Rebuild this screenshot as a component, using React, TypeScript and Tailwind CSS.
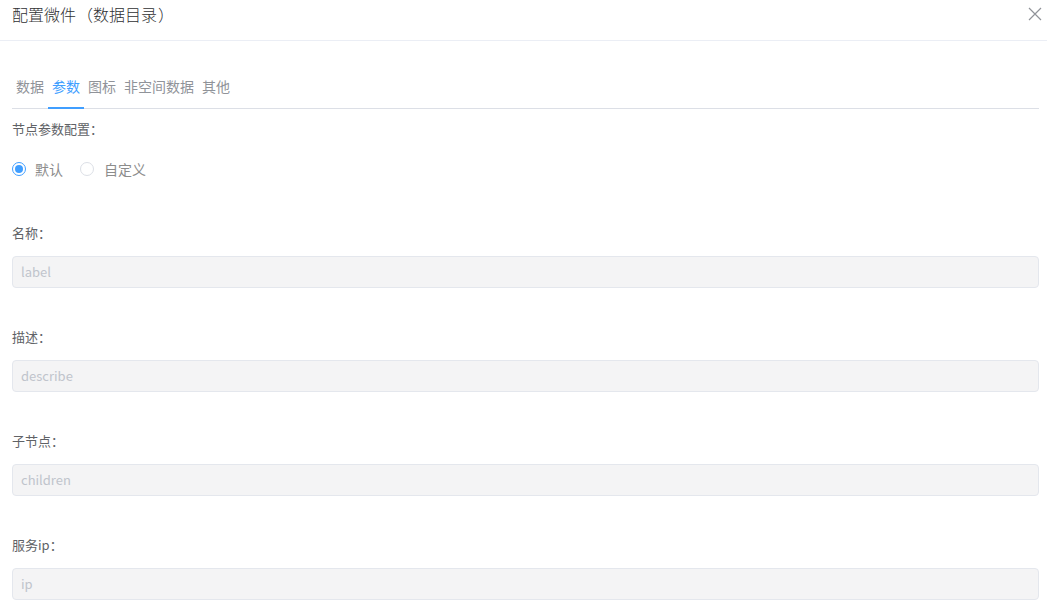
import React from "react";

const font = { fontFamily: '"Noto Sans CJK SC", "Noto Sans", sans-serif' };

function Field({ label, placeholder }: { label: string; placeholder: string }) {
  return (
    <div className="mt-[39px] first:mt-[44px]">
      <div className="text-[13px] leading-[20px] text-[#606266]">{label}</div>
      <div className="mt-[13px] h-[32px] rounded-[4px] border border-[#e4e7ed] bg-[#f4f4f5] pl-[8px] text-[13px] leading-[30px] text-[#c0c4cc]">
        {placeholder}
      </div>
    </div>
  );
}

export default function App() {
  const tabs = ["数据", "参数", "图标", "非空间数据", "其他"];
  return (
    <div className="h-[609px] w-[1047px] overflow-hidden bg-white" style={font}>
      <div className="flex h-[41px] items-start justify-between border-b border-[#ebeef5] pl-3 pr-[4px]">
        <div className="pt-[4px] text-[16px] font-light leading-[20px] text-[#303133]">
          配置微件<span className="ml-[1px]">（</span>数据目录<span className="ml-[1px]">）</span>
        </div>
        <svg className="mr-[1px] mt-[7px]" width="14" height="14" viewBox="0 0 14 14">
          <path d="M1 1 L13 13 M13 1 L1 13" stroke="#909399" strokeWidth="1.2" fill="none" />
        </svg>
      </div>
      <div className="pl-3 pr-2 pt-[26px]">
        <div className="relative flex border-b border-[#dcdfe6]">
          {tabs.map((t, i) => (
            <div
              key={t}
              className={
                "relative h-[41px] px-1 pb-[1px] text-[14px] leading-[39px] " +
                (i === 1 ? "text-[#409eff]" : "text-[#909399]")
              }
            >
              {t}
              {i === 1 && <div className="absolute bottom-[-1px] left-0 right-0 h-[2px] bg-[#409eff]" />}
            </div>
          ))}
        </div>
        <div className="mt-[10px] text-[13px] leading-[20px] text-[#606266]">节点参数配置：</div>
        <div className="mt-[20px] flex h-[20px] items-center text-[14px] text-[#606266]">
          <div className="flex items-center">
            <span className="flex h-[14px] w-[14px] items-center justify-center rounded-full border border-[#409eff] bg-white">
              <span className="h-[8px] w-[8px] rounded-full bg-[#409eff]" />
            </span>
            <span className="ml-[9px] text-[#8c8c8c]">默认</span>
          </div>
          <div className="ml-[17px] flex items-center">
            <span className="h-[14px] w-[14px] rounded-full border border-[#dcdfe6] bg-white" />
            <span className="ml-[10px] text-[#8c8c8c]">自定义</span>
          </div>
        </div>
        <div className="mt-[1px]">
          <Field label="名称：" placeholder="label" />
          <Field label="描述：" placeholder="describe" />
          <Field label="子节点：" placeholder="children" />
          <Field label="服务ip：" placeholder="ip" />
        </div>
      </div>
    </div>
  );
}
